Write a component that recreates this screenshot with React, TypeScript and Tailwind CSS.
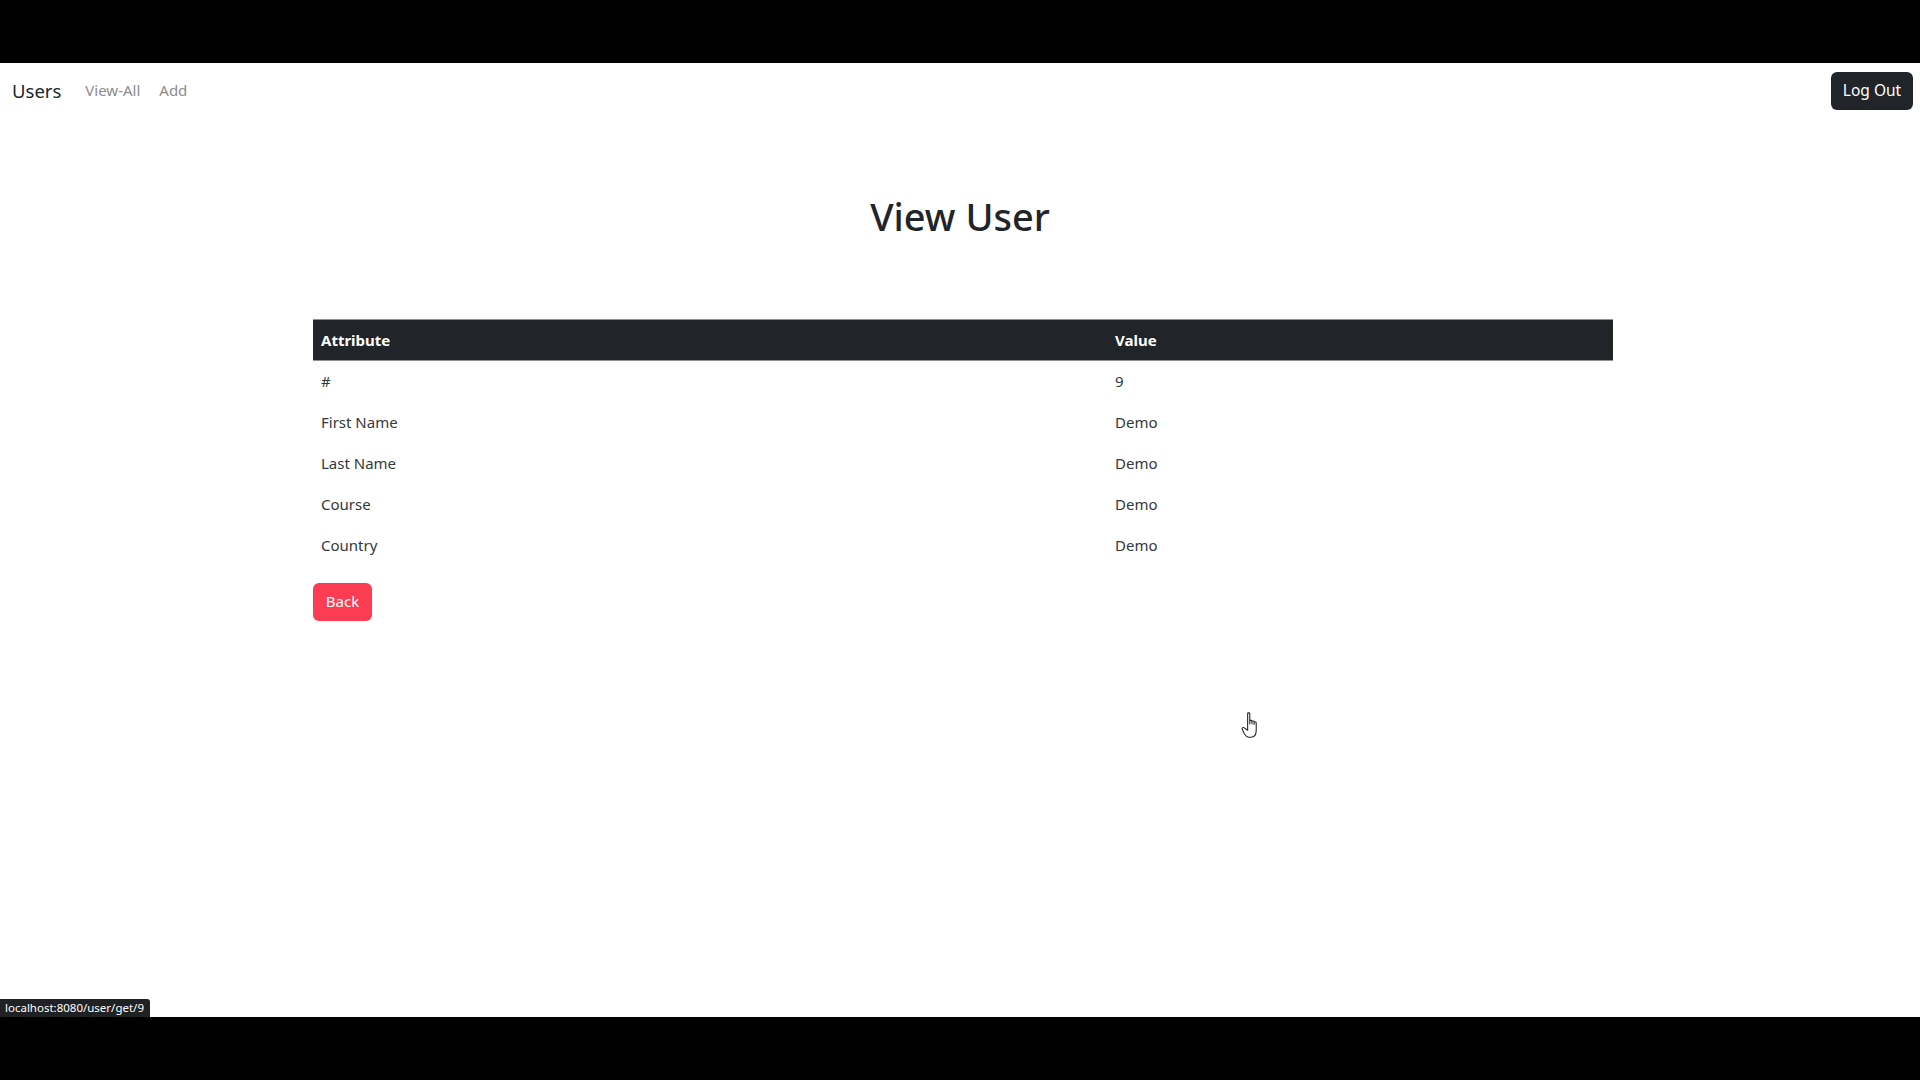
import React from "react";

const rows: [string, string][] = [
  ["#", "9"],
  ["First Name", "Demo"],
  ["Last Name", "Demo"],
  ["Course", "Demo"],
  ["Country", "Demo"],
];

export default function App() {
  return (
    <div
      className="w-[1920px] h-[1080px] flex flex-col bg-white overflow-hidden"
      style={{ fontFamily: '"Noto Sans", "Open Sans", sans-serif' }}
    >
      <div className="h-[63px] bg-black shrink-0" />
      <div className="flex-1 relative">
        <nav className="h-[55px] flex items-center justify-between pl-[12px] pr-[7px]">
          <div className="flex items-center">
            <span className="text-[18.5px] text-[#212529] mr-[24px]">Users</span>
            <span className="text-[15px] text-[#8c8c8c] mr-[19px]">View-All</span>
            <span className="text-[15px] text-[#8c8c8c]">Add</span>
          </div>
          <button className="h-[38px] w-[82px] rounded-[6px] bg-[#212529] text-white text-[15.5px]">
            Log Out
          </button>
        </nav>
        <h1 className="text-center text-[38px] leading-[48px] font-medium text-[#212529] mt-[74px]">
          View User
        </h1>
        <div className="w-[1300px] ml-[313px] mt-[79px]">
          <table className="w-full border-collapse text-[15px] text-[#33383d]">
            <thead>
              <tr className="bg-[#212529] text-white h-[41px] border-t border-b border-[#8e9296]">
                <th className="text-left font-bold px-2 w-[794px]">Attribute</th>
                <th className="text-left font-bold px-2">Value</th>
              </tr>
            </thead>
            <tbody>
              {rows.map(([a, v]) => (
                <tr key={a} className="h-[41px]">
                  <td className="px-2">{a}</td>
                  <td className="px-2">{v}</td>
                </tr>
              ))}
            </tbody>
          </table>
          <button className="mt-[17px] h-[38px] w-[59px] rounded-[6px] bg-[#fb3c53] text-white text-[15px]">
            Back
          </button>
        </div>
        <svg
          className="absolute left-[1241px] top-[648px]"
          width="24"
          height="30"
          viewBox="0 0 22 28"
        >
          <path
            d="M6 2.5 C6 1.5 8 1.5 8 2.5 L8 12 L8 9.5 C8 8.5 10 8.5 10 9.5 L10 12 L10 10 C10 9 12 9 12 10 L12 12.5 L12 11 C12 10 14 10 14 11 L14 18 C14 22 12 24.5 9 24.5 L7 24.5 C5 24.5 4 23 3 21.5 L1 17 C0.5 16 1.5 15 2.5 15.5 L6 18 Z"
            fill="white"
            stroke="#222"
            strokeWidth="1"
            strokeLinejoin="round"
          />
        </svg>
        <div className="absolute left-0 bottom-0 h-[18px] pl-[5px] pr-[6px] bg-[#202124] rounded-tr-[3px] text-white text-[11.5px] leading-[18px]">
          localhost:8080/user/get/9
        </div>
      </div>
      <div className="h-[63px] bg-black shrink-0" />
    </div>
  );
}
